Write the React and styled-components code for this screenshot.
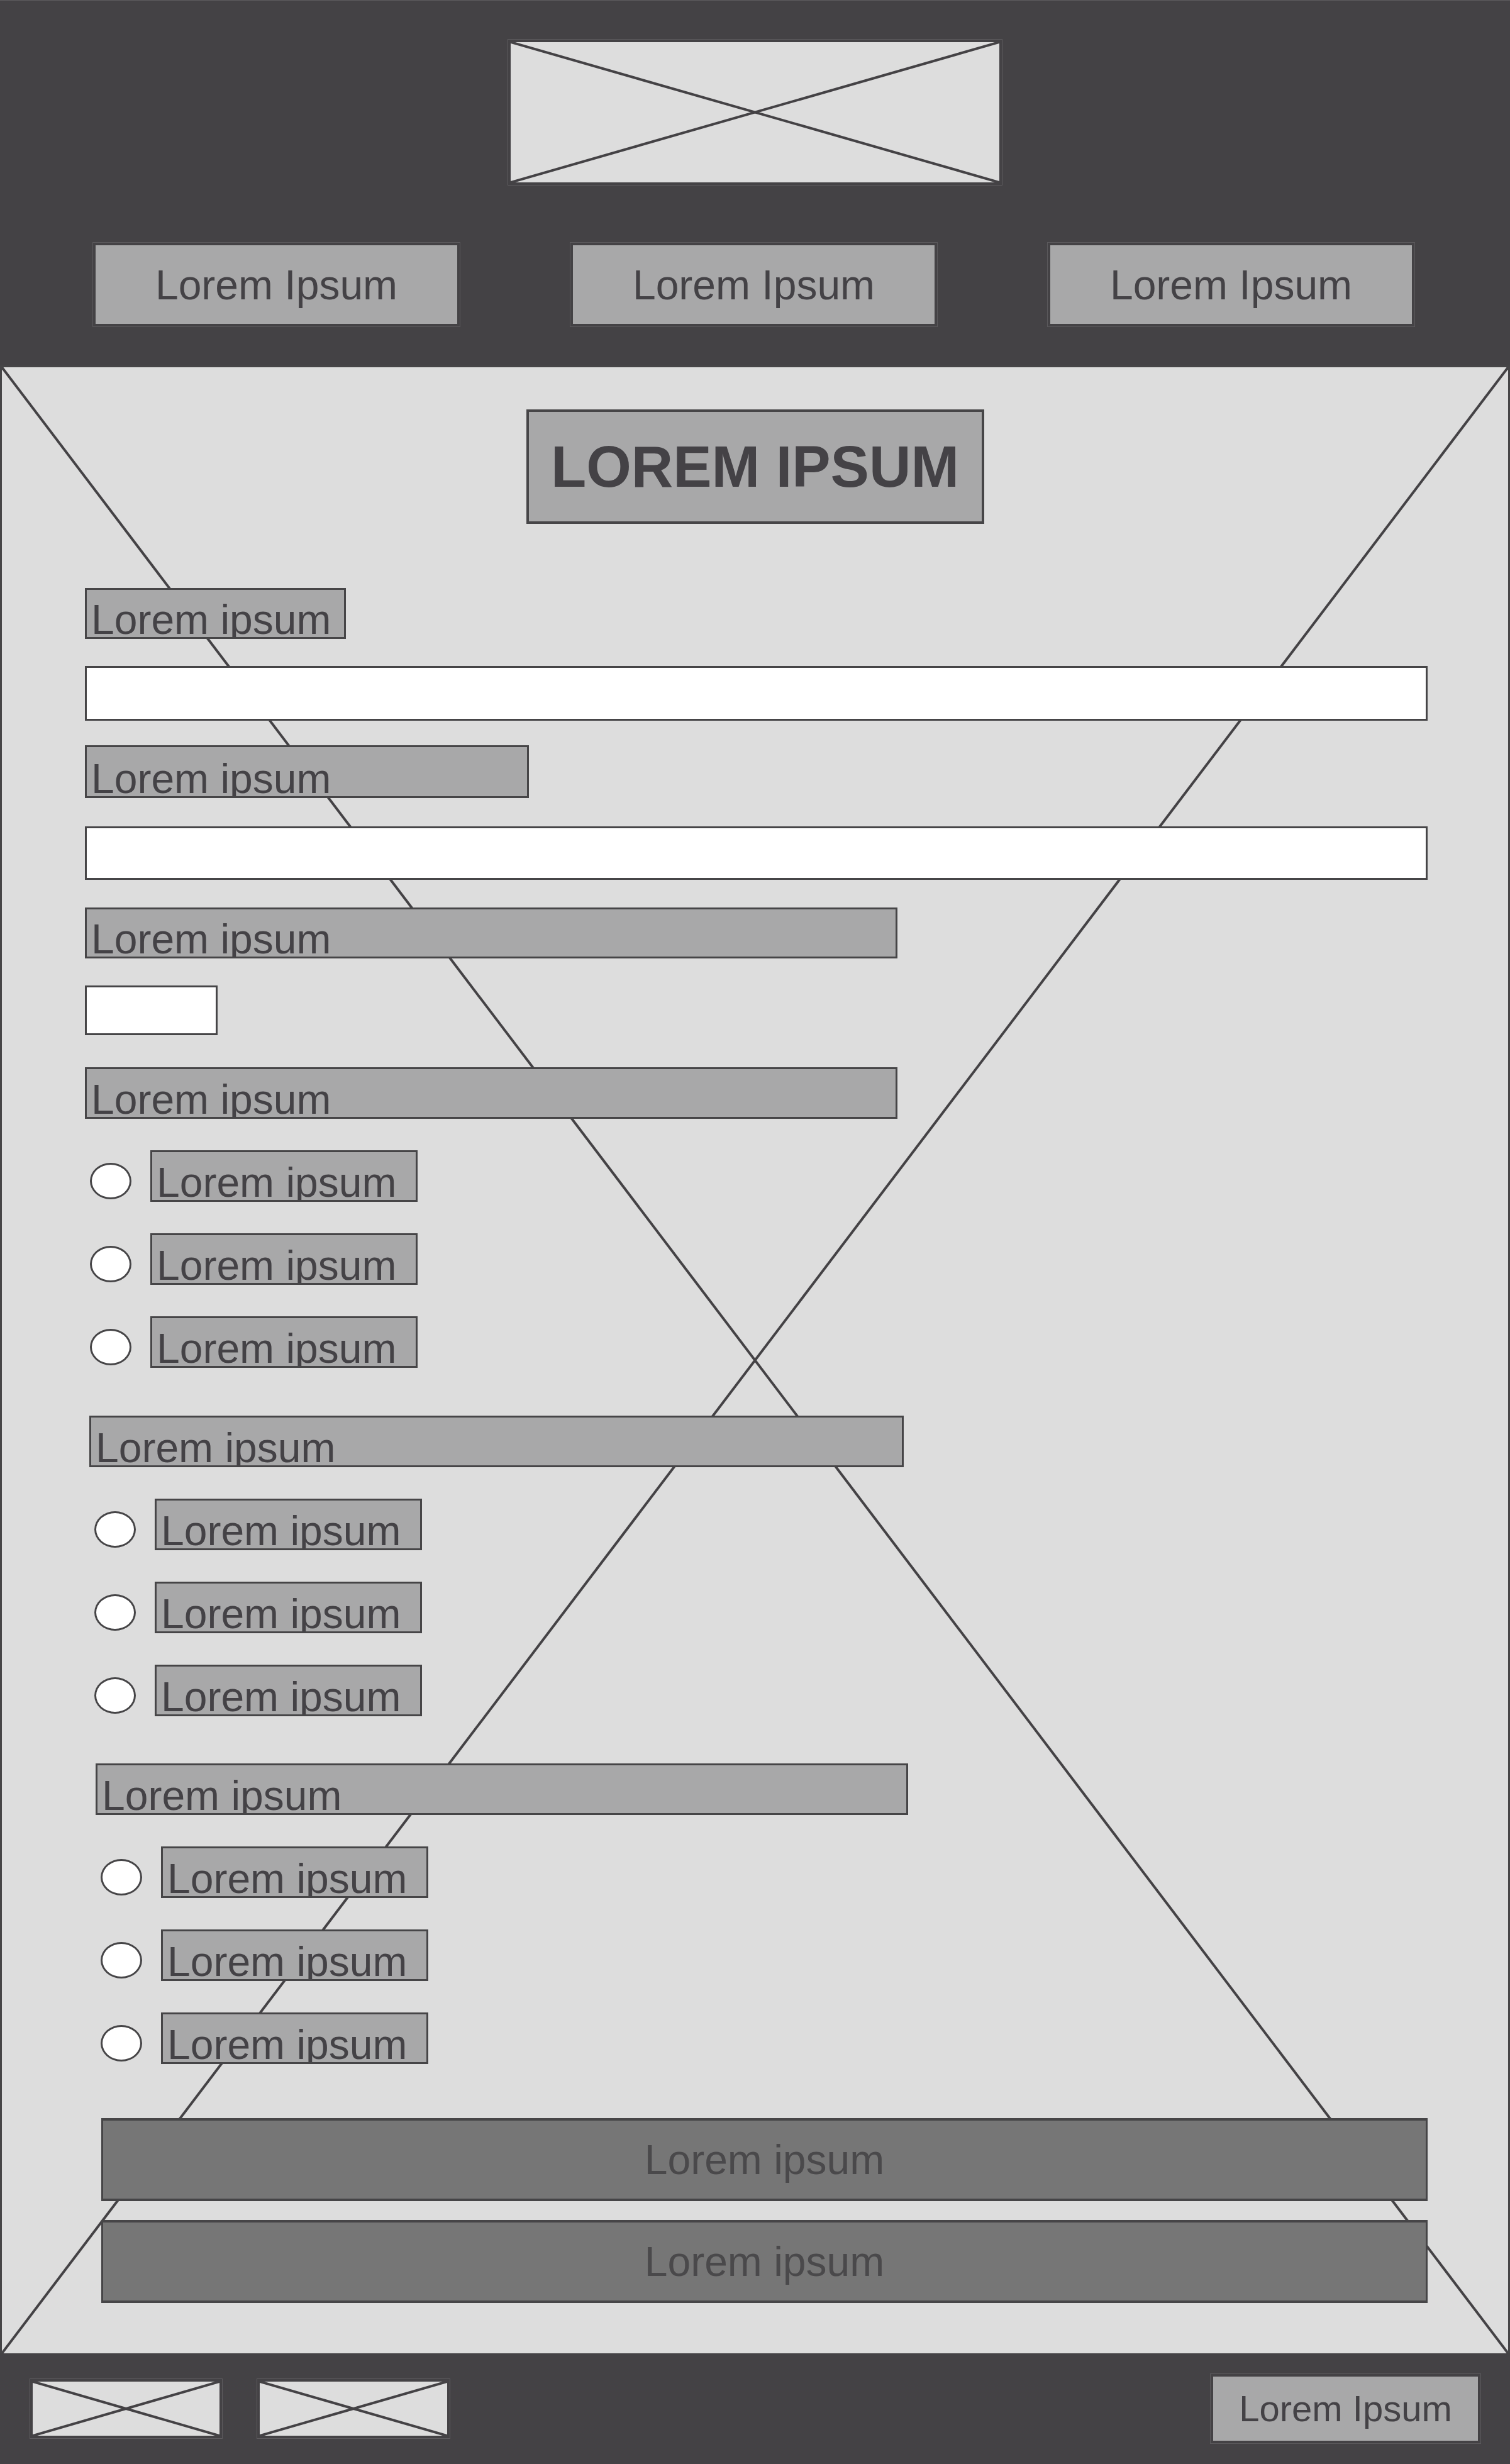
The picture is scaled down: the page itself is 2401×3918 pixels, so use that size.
import React from "react";
import styled, { createGlobalStyle } from "styled-components";

const GlobalStyle = createGlobalStyle`
  html, body {
    margin: 0;
    padding: 0;
  }
  body {
    background: #444245;
    font-family: "Liberation Sans", Arial, sans-serif;
  }
`;

const Page = styled.div`
  width: 2401px;
  display: flex;
  flex-direction: column;
`;

const Header = styled.header`
  height: 581px;
  box-sizing: border-box;
  background: #444245;
  border-top: 1px solid #5d5b5e;
  padding-top: 62px;
  display: flex;
  flex-direction: column;
  align-items: center;
`;

const Placeholder = styled.div`
  width: ${(p) => p.$w}px;
  height: ${(p) => p.$h}px;
  box-sizing: border-box;
  border: 4px solid #444245;
  box-shadow: 0 0 0 1px #5e5c5f;
  background: #dddddd;
  flex-shrink: 0;

  svg {
    display: block;
    width: 100%;
    height: 100%;
  }
`;

const Nav = styled.nav`
  width: 100%;
  box-sizing: border-box;
  margin-top: 92px;
  padding: 0 152px 0 148px;
  display: flex;
  justify-content: space-between;
`;

const GreyButton = styled.button`
  width: ${(p) => p.$w}px;
  height: ${(p) => p.$h}px;
  box-sizing: border-box;
  border: 4px solid #444245;
  box-shadow: 0 0 0 1px #5b595c;
  background: #a8a8a9;
  padding: 0;
  font-family: "Liberation Sans", Arial, sans-serif;
  font-size: ${(p) => p.$fs}px;
  line-height: 1;
  color: #444246;
  cursor: pointer;
`;

const Main = styled.main`
  position: relative;
  box-sizing: border-box;
  background: #dddddd;
  border: 3px solid #464547;
  border-bottom: none;
  padding: 67px 0 80px;
  display: flex;
  flex-direction: column;
`;

const Cross = styled.svg`
  position: absolute;
  inset: 0;
  width: 100%;
  height: 100%;
  z-index: 0;
`;

const Title = styled.h1`
  position: relative;
  z-index: 1;
  align-self: center;
  margin: 0;
  width: 728px;
  height: 182px;
  box-sizing: border-box;
  border: 4px solid #464547;
  background: #a8a8a9;
  display: flex;
  align-items: center;
  justify-content: center;
  font-size: 92px;
  font-weight: 700;
  line-height: 1;
  color: #444246;
`;

const Form = styled.form`
  position: relative;
  z-index: 1;
  margin-top: 102px;
  padding-left: 132px;
  display: flex;
  flex-direction: column;
  align-items: flex-start;
`;

const FieldLabel = styled.div`
  display: flex;
  align-items: flex-end;
  width: ${(p) => p.$w}px;
  height: ${(p) => p.$h || 82}px;
  margin-top: ${(p) => p.$mt || 0}px;
  box-sizing: border-box;
  border: 3px solid #464547;
  background: #a8a8a9;
  padding-left: 7px;
  overflow: hidden;
  font-size: 66px;
  line-height: 1;
  color: #444246;
  white-space: nowrap;

  span {
    margin-bottom: -5px;
  }
`;

const TextInput = styled.input`
  display: block;
  width: ${(p) => p.$w}px;
  height: ${(p) => p.$h}px;
  margin: ${(p) => p.$mt}px 0 0;
  box-sizing: border-box;
  border: 3px solid #464547;
  background: #ffffff;
  padding: 0;
  outline: none;
`;

const Group = styled.div`
  display: flex;
  flex-direction: column;
  gap: 50px;
  margin-top: ${(p) => p.$mt}px;
  margin-left: ${(p) => p.$shift}px;
`;

const RadioRow = styled.div`
  display: flex;
  align-items: flex-start;
  gap: 30px;
  padding-left: 8px;
`;

const RadioDot = styled.span`
  width: 66px;
  height: 58px;
  margin-top: 20px;
  box-sizing: border-box;
  border: 3px solid #464547;
  border-radius: 50%;
  background: #ffffff;
  flex-shrink: 0;
`;

const Actions = styled.div`
  margin-top: 86px;
  margin-left: 26px;
  display: flex;
  flex-direction: column;
  gap: 30px;
`;

const ActionButton = styled.button`
  display: block;
  width: 2109px;
  height: 132px;
  box-sizing: border-box;
  border: 3px solid #464547;
  border-top-width: 4px;
  border-bottom-width: 4px;
  background: #767676;
  padding: 0;
  font-family: "Liberation Sans", Arial, sans-serif;
  font-size: 66px;
  line-height: 1;
  color: #4a494b;
  cursor: pointer;
`;

const Footer = styled.footer`
  height: 176px;
  box-sizing: border-box;
  background: #444245;
  padding: 0 47px 0 48px;
  display: flex;
  align-items: center;
  gap: 56px;
`;

const FooterEnd = styled.div`
  margin-left: auto;
`;

function XMark({ width = 3 }) {
  return (
    <svg>
      <line x1="0" y1="0" x2="100%" y2="100%" stroke="#444245" strokeWidth={width} />
      <line x1="100%" y1="0" x2="0" y2="100%" stroke="#444245" strokeWidth={width} />
    </svg>
  );
}

const groups = [
  { shift: 0, mt: 51, w: 1292 },
  { shift: 7, mt: 76, w: 1295 },
  { shift: 17, mt: 75, w: 1292 },
];

function RadioGroup({ shift, mt, w }) {
  return (
    <Group $shift={shift} $mt={mt}>
      <FieldLabel $w={w}>
        <span>Lorem ipsum</span>
      </FieldLabel>
      {[0, 1, 2].map((i) => (
        <RadioRow key={i}>
          <RadioDot />
          <FieldLabel $w={425}>
            <span>Lorem ipsum</span>
          </FieldLabel>
        </RadioRow>
      ))}
    </Group>
  );
}

export default function App() {
  return (
    <Page>
      <GlobalStyle />
      <Header>
        <Placeholder $w={785} $h={231}>
          <XMark width={4} />
        </Placeholder>
        <Nav>
          <GreyButton $w={583} $h={133} $fs={66}>Lorem Ipsum</GreyButton>
          <GreyButton $w={583} $h={133} $fs={66}>Lorem Ipsum</GreyButton>
          <GreyButton $w={583} $h={133} $fs={66}>Lorem Ipsum</GreyButton>
        </Nav>
      </Header>

      <Main>
        <Cross>
          <line x1="0" y1="0" x2="100%" y2="100%" stroke="#444245" strokeWidth="4" />
          <line x1="100%" y1="0" x2="0" y2="100%" stroke="#444245" strokeWidth="4" />
        </Cross>
        <Title>LOREM IPSUM</Title>
        <Form onSubmit={(e) => e.preventDefault()}>
          <FieldLabel $w={415} $h={81}>
            <span>Lorem ipsum</span>
          </FieldLabel>
          <TextInput $w={2135} $h={87} $mt={43} />
          <FieldLabel $w={706} $h={84} $mt={39}>
            <span>Lorem ipsum</span>
          </FieldLabel>
          <TextInput $w={2135} $h={85} $mt={45} />
          <FieldLabel $w={1292} $h={81} $mt={44}>
            <span>Lorem ipsum</span>
          </FieldLabel>
          <TextInput $w={211} $h={79} $mt={43} />
          {groups.map((g, i) => (
            <RadioGroup key={i} {...g} />
          ))}
          <Actions>
            <ActionButton type="button">Lorem ipsum</ActionButton>
            <ActionButton type="button">Lorem ipsum</ActionButton>
          </Actions>
        </Form>
      </Main>

      <Footer>
        <Placeholder $w={305} $h={94}>
          <XMark width={4} />
        </Placeholder>
        <Placeholder $w={306} $h={94}>
          <XMark width={4} />
        </Placeholder>
        <FooterEnd>
          <GreyButton $w={429} $h={110} $fs={58}>Lorem Ipsum</GreyButton>
        </FooterEnd>
      </Footer>
    </Page>
  );
}
